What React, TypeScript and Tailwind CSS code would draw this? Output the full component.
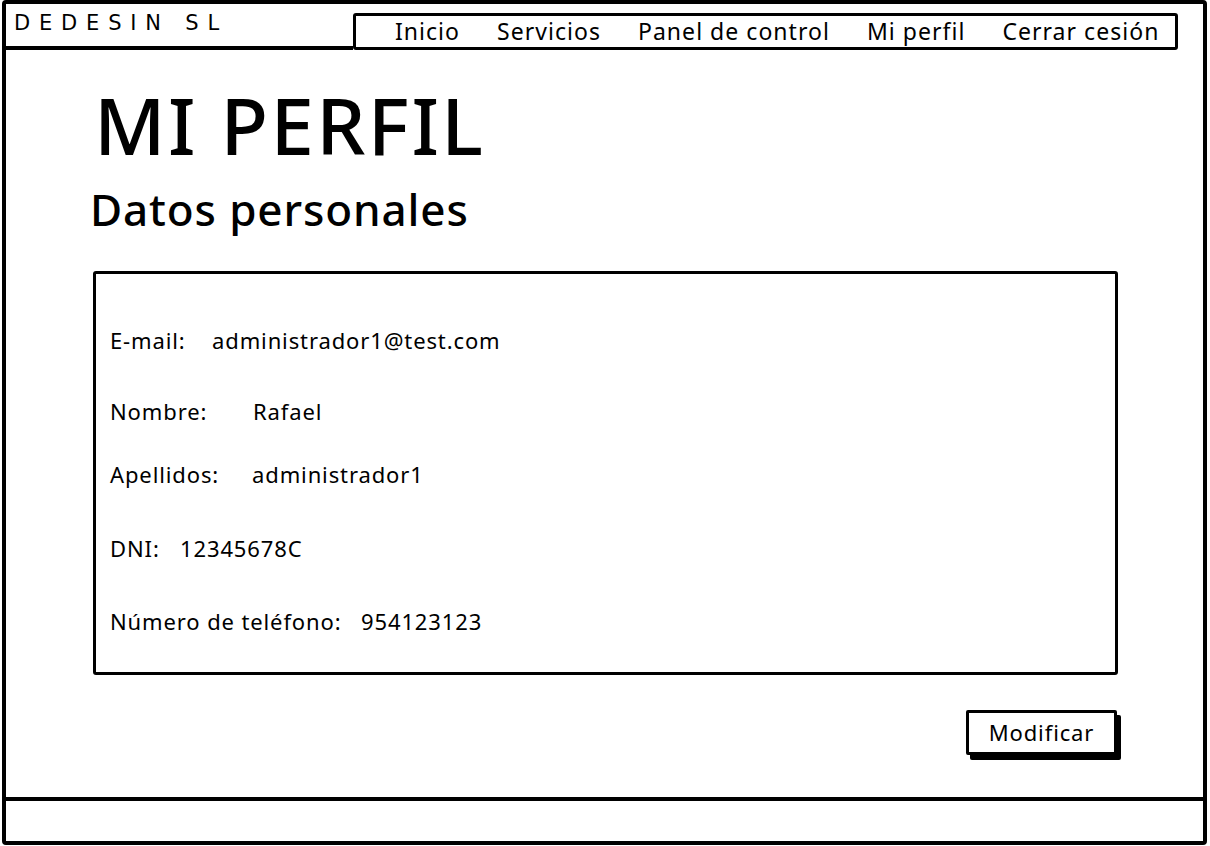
const navItems = ['Inicio', 'Servicios', 'Panel de control', 'Mi perfil', 'Cerrar cesión']

// label widths taken from where each value starts in the mock
const fields = [
  { label: 'E-mail:', value: 'administrador1@test.com', w: 'w-[102px]', mt: 'mt-[55px]' },
  { label: 'Nombre:', value: 'Rafael', w: 'w-[143px]', mt: 'mt-[49px]' },
  { label: 'Apellidos:', value: 'administrador1', w: 'w-[142px]', mt: 'mt-[41px]' },
  { label: 'DNI:', value: '12345678C', w: 'w-[70px]', mt: 'mt-[52px]' },
  { label: 'Número de teléfono:', value: '954123123', w: 'w-[251px]', mt: 'mt-[51px]' },
]

export default function App() {
  return (
    <div className="h-[846px] w-[1210px] bg-white pb-[1px] pl-[2px] pr-[3px] text-black [font-family:'Noto_Sans',sans-serif]">
      <div className="flex h-full flex-col rounded-sm border-4 border-black">
        <header className="flex h-[46px] shrink-0">
          <div className="flex w-[347px] items-center border-b-4 border-black pl-2 pb-[2px] text-[21px] tracking-[0.42em] [font-family:'DejaVu_Sans',sans-serif]">
            DEDESIN SL
          </div>
          <nav className="mt-[9px] flex h-[37px] w-[825px] items-center gap-[37px] rounded-[3px] border-[3px] border-black pl-[39px] text-[23px] leading-none tracking-[0.045em]">
            {navItems.map((item) => (
              <span key={item}>{item}</span>
            ))}
          </nav>
        </header>

        <main className="flex flex-1 flex-col">
          <h1 className="ml-[88px] mt-[36px] text-[78px] font-medium leading-none tracking-[0.03em]">MI PERFIL</h1>
          <h2 className="ml-[84px] mt-[23px] text-[44px] font-medium leading-none tracking-[0.02em]">Datos personales</h2>

          <section className="ml-[87px] mt-[40px] h-[404px] w-[1025px] rounded-[3px] border-[3px] border-black px-[14px]">
            {fields.map((f) => (
              <div key={f.label} className={`flex text-[22px] leading-none tracking-[0.04em] ${f.mt}`}>
                <span className={`shrink-0 ${f.w}`}>{f.label}</span>
                <span>{f.value}</span>
              </div>
            ))}
          </section>

          <div className="mr-[86px] mt-[35px] flex justify-end">
            <button
              type="button"
              className="h-[45px] w-[151px] rounded-[2px] border-[3px] border-black bg-white text-[22px] tracking-[0.04em] shadow-[4px_5px_0_0_#000]"
            >
              Modificar
            </button>
          </div>
        </main>

        <footer className="h-[44px] shrink-0 border-t-4 border-black" />
      </div>
    </div>
  )
}
